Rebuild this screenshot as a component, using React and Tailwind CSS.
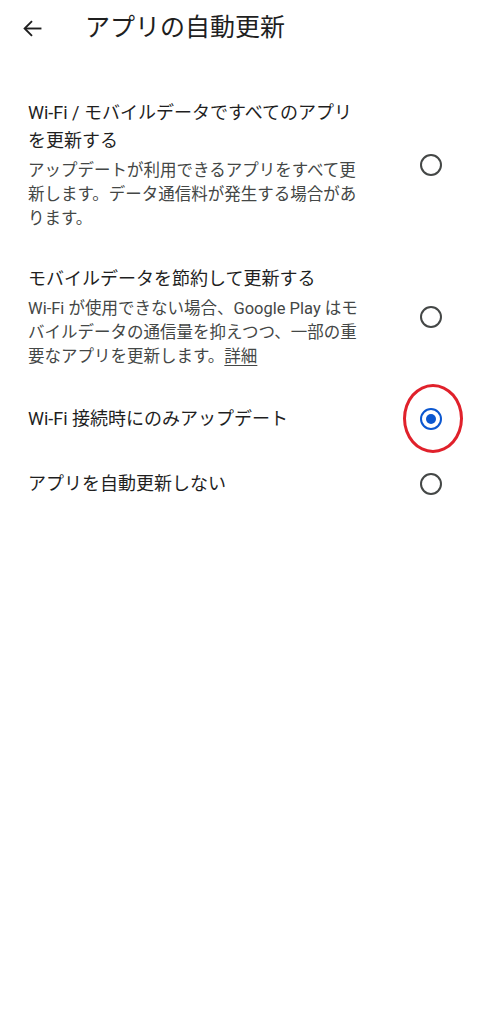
import React from 'react';

const options = [
  {
    id: 'all',
    title: 'Wi-Fi / モバイルデータですべてのアプリを更新する',
    desc: 'アップデートが利用できるアプリをすべて更新します。データ通信料が発生する場合があります。',
  },
  {
    id: 'saver',
    title: 'モバイルデータを節約して更新する',
    desc: 'Wi-Fi が使用できない場合、Google Play はモバイルデータの通信量を抑えつつ、一部の重要なアプリを更新します。',
    link: '詳細',
  },
  { id: 'wifi', title: 'Wi-Fi 接続時にのみアップデート' },
  { id: 'off', title: 'アプリを自動更新しない' },
];

function Radio({ checked, marked }) {
  return (
    <div className="relative w-[22px] h-[22px] shrink-0">
      {checked ? (
        <div className="w-[22px] h-[22px] rounded-full border-2 border-[#0b57d0] flex items-center justify-center">
          <div className="w-[10px] h-[10px] rounded-full bg-[#0b57d0]" />
        </div>
      ) : (
        <div className="w-[22px] h-[22px] rounded-full border-2 border-[#444746]" />
      )}
      {marked && (
        <div className="absolute left-[-17px] top-[-24px] w-[60px] h-[69px] rounded-[50%] border-[3px] border-[#e0212b]" />
      )}
    </div>
  );
}

export default function App() {
  const [selected, setSelected] = React.useState('wifi');

  return (
    <div
      className="min-h-screen bg-white"
      style={{ fontFamily: 'Roboto, "Noto Sans CJK JP", sans-serif' }}
    >
      {/* Header */}
      <div className="h-14 flex items-center pl-[22px]">
        <svg width="20" height="17" viewBox="0 0 20 18" fill="none" stroke="#1f1f1f" strokeWidth="2">
          <path d="M20 9H2.5" />
          <path d="M10 1.2 2.2 9l7.8 7.8" />
        </svg>
        <h1 className="ml-[43px] text-[25px] leading-8 text-[#1f1f1f]">アプリの自動更新</h1>
      </div>

      {/* Options */}
      <div className="pt-[26px]">
        {options.map((opt) => (
          <div
            key={opt.id}
            onClick={() => setSelected(opt.id)}
            className="flex items-center min-h-[65px] py-[17px] pl-[28px] pr-[35px]"
          >
            <div className="w-[344px]">
              <div className="max-w-[334px] text-[18px] leading-7 text-[#1f1f1f]">{opt.title}</div>
              {opt.desc && (
                <div className="mt-1 text-[16.5px] leading-6 text-[#444746]">
                  {opt.desc}
                  {opt.link && <span className="underline underline-offset-[3px]">{opt.link}</span>}
                </div>
              )}
            </div>
            <div className="flex-1" />
            <Radio checked={selected === opt.id} marked={opt.id === 'wifi'} />
          </div>
        ))}
      </div>
    </div>
  );
}
